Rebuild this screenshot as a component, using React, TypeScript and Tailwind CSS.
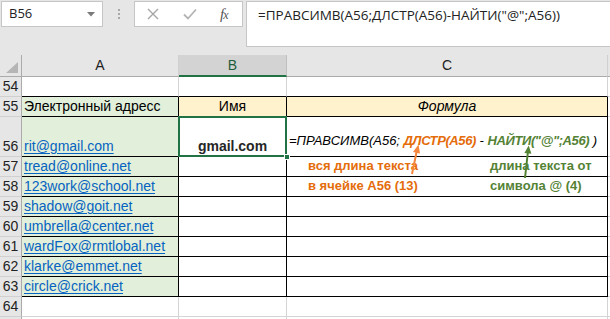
import React from 'react';

const emails = [
  'tread@online.net',
  '123work@school.net',
  'shadow@goit.net',
  'umbrella@center.net',
  'wardFox@rmtlobal.net',
  'klarke@emmet.net',
  'circle@crick.net',
];

function RowNum({ n, h }: { n: string; h: string }) {
  return (
    <div className={`w-[22px] shrink-0 ${h} bg-[#e6e6e6] border-r border-b border-r-[#ababab] border-b-[#d0d0d0] flex items-end justify-center pb-px text-[14px] leading-[18px] text-[#222]`}>
      {n}
    </div>
  );
}

export default function App() {
  return (
    <div className="w-[610px] h-[319px] overflow-hidden bg-white font-['Liberation_Sans',Arial,sans-serif] text-black">
      {/* Toolbar: name box, buttons, formula bar */}
      <div className="h-[55px] bg-[#e6e6e6] flex items-start pt-px">
        <div className="ml-px w-[102px] h-[26px] bg-white border border-[#c6c6c6] flex items-center justify-between pl-[7px] pr-[7px] font-['Open_Sans',sans-serif] text-[13px] text-[#222]">
          <span>B56</span>
          <svg width="8" height="5" viewBox="0 0 8 5"><path d="M0 0h8L4 4.5z" fill="#7a7a7a" /></svg>
        </div>
        <div className="w-[31px] h-[26px] flex items-center justify-center">
          <div className="flex flex-col gap-[2px]">
            <span className="w-[2px] h-[2px] bg-[#a8a8a8]" />
            <span className="w-[2px] h-[2px] bg-[#a8a8a8]" />
            <span className="w-[2px] h-[2px] bg-[#a8a8a8]" />
          </div>
        </div>
        <div className="w-[109px] h-[26px] bg-white border border-[#c6c6c6] flex items-center">
          <svg className="ml-[12px]" width="12" height="12" viewBox="0 0 12 12">
            <path d="M1 1l10 10M11 1L1 11" stroke="#a6a6a6" strokeWidth="1.4" />
          </svg>
          <svg className="ml-[24px]" width="14" height="12" viewBox="0 0 14 12">
            <path d="M1 6.5l4 4L13 1.5" stroke="#b4b4b4" strokeWidth="1.8" fill="none" />
          </svg>
          <span className="ml-[23px] font-['Liberation_Serif',serif] italic text-[15px] text-[#555] tracking-[-1px]">
            f<span className="text-[12px]">x</span>
          </span>
        </div>
        <div className="ml-[3px] flex-1 h-[46px] bg-white border border-[#c6c6c6] border-r-0 pl-[11px] pt-[3px] font-['Open_Sans',sans-serif] text-[13.5px] text-[#222]">
          =ПРАВСИМВ(A56;ДЛСТР(A56)-НАЙТИ("@";A56))
        </div>
      </div>

      {/* Sheet */}
      <div className="relative text-[14px]">
        {/* Column headers */}
        <div className="flex h-[22px] text-[#222]">
          <div className="w-[22px] shrink-0 bg-[#e6e6e6] border-r border-b border-[#ababab] relative">
            <svg className="absolute left-[6px] top-[7px]" width="12" height="11" viewBox="0 0 12 11">
              <path d="M12 0v11H0z" fill="#b5b5b5" />
            </svg>
          </div>
          <div className="w-[157px] shrink-0 bg-[#e6e6e6] border-r border-b border-r-[#d0d0d0] border-b-[#ababab] flex items-center justify-center">A</div>
          <div className="w-[108px] shrink-0 bg-[#d3d3d3] border-r border-r-[#c0c0c0] border-b-2 border-b-[#217346] flex items-center justify-center text-[#1e5e3a]">B</div>
          <div className="w-[321px] shrink-0 bg-[#e6e6e6] border-r border-b border-r-[#d0d0d0] border-b-[#ababab] flex items-center justify-center">C</div>
          <div className="flex-1 bg-[#e6e6e6] border-b border-[#ababab]" />
        </div>

        {/* Row 54 */}
        <div className="flex">
          <RowNum n="54" h="h-[20px]" />
          <div className="w-[157px] shrink-0 h-[20px] border-r border-b border-r-[#d4d4d4] border-b-black" />
          <div className="w-[108px] shrink-0 h-[20px] border-r border-b border-r-[#d4d4d4] border-b-black" />
          <div className="w-[321px] shrink-0 h-[20px] border-r border-b border-r-[#d4d4d4] border-b-black" />
          <div className="flex-1 h-[20px] border-b border-[#d4d4d4]" />
        </div>

        {/* Row 55 headings */}
        <div className="flex leading-[18px]">
          <RowNum n="55" h="h-[20px]" />
          <div className="w-[157px] shrink-0 h-[20px] bg-[#e2efda] border-r border-b border-black flex items-end pl-[2px] pb-px">Электронный адресс</div>
          <div className="w-[108px] shrink-0 h-[20px] bg-[#fff2cc] border-r border-b border-black flex items-end justify-center pb-px">Имя</div>
          <div className="w-[321px] shrink-0 h-[20px] bg-[#fff2cc] border-r border-b border-black flex items-end justify-center pb-px italic">Формула</div>
          <div className="flex-1 h-[20px] border-b border-[#d4d4d4]" />
        </div>

        {/* Row 56 */}
        <div className="flex leading-[18px]">
          <RowNum n="56" h="h-[40px]" />
          <div className="w-[157px] shrink-0 h-[40px] bg-[#e2efda] border-r border-b border-black flex items-end pl-[2px] pb-px">
            <span className="text-[#0563c1] underline underline-offset-2">rit@gmail.com</span>
          </div>
          <div className="w-[108px] shrink-0 h-[40px] border-r border-b border-black flex items-end justify-center pb-px font-bold text-[#262626] relative">
            gmail.com
            <div className="absolute -left-px -top-px -right-px -bottom-px border-2 border-[#217346]" />
            <div className="absolute -right-[4px] -bottom-[4px] w-[6px] h-[6px] bg-[#217346] border border-white" />
          </div>
          <div className="w-[321px] shrink-0 h-[40px] border-r border-b border-black flex items-end pl-[2px] pb-[6px] italic whitespace-nowrap text-[13px]">
            <span>
              =ПРАВСИМВ(A56; <b className="text-[#e46c0a] tracking-[-0.4px]">ДЛСТР(A56)</b> - <b className="text-[#548235] tracking-[-0.4px]">НАЙТИ("@";A56)</b> )
            </span>
          </div>
          <div className="flex-1 h-[40px] border-b border-[#d4d4d4]" />
        </div>

        {/* Rows 57-63 */}
        {emails.map((e, i) => (
          <div key={e} className="flex leading-[18px]">
            <RowNum n={String(57 + i)} h="h-[20px]" />
            <div className="w-[157px] shrink-0 h-[20px] bg-[#e2efda] border-r border-b border-black flex items-end pl-[2px] pb-px">
              <span className="text-[#0563c1] underline underline-offset-2">{e}</span>
            </div>
            <div className="w-[108px] shrink-0 h-[20px] border-r border-b border-black" />
            <div className="w-[321px] shrink-0 h-[20px] border-r border-b border-black flex items-end pb-px font-bold text-[13px] whitespace-nowrap">
              {i === 0 && (
                <>
                  <span className="w-[203px] pl-[21px] text-[#e46c0a]">вся длина текста</span>
                  <span className="text-[#548235]">длина текста от</span>
                </>
              )}
              {i === 1 && (
                <>
                  <span className="w-[203px] pl-[21px] text-[#e46c0a]">в ячейке A56 (13)</span>
                  <span className="text-[#548235]">символа @ (4)</span>
                </>
              )}
            </div>
            <div className="flex-1 h-[20px] border-b border-[#d4d4d4]" />
          </div>
        ))}

        {/* Row 64 */}
        <div className="flex">
          <RowNum n="64" h="h-[20px]" />
          <div className="w-[157px] shrink-0 h-[20px] border-r border-b border-[#d4d4d4]" />
          <div className="w-[108px] shrink-0 h-[20px] border-r border-b border-[#d4d4d4]" />
          <div className="w-[321px] shrink-0 h-[20px] border-r border-b border-[#d4d4d4]" />
          <div className="flex-1 h-[20px] border-b border-[#d4d4d4]" />
        </div>
        <div className="flex h-[10px]">
          <div className="w-[22px] shrink-0 bg-[#e6e6e6] border-r border-[#ababab]" />
          <div className="w-[157px] shrink-0 border-r border-[#d4d4d4]" />
          <div className="w-[108px] shrink-0 border-r border-[#d4d4d4]" />
          <div className="w-[321px] shrink-0 border-r border-[#d4d4d4]" />
        </div>

        {/* Annotation arrows */}
        <svg className="absolute left-0 top-[-55px] pointer-events-none" width="610" height="319" viewBox="0 0 610 319">
          <path d="M412 174L417 150" stroke="#f4863d" strokeWidth="2" />
          <path d="M418.5 144.5l-5.5 7.5l7 1.5z" fill="#f4863d" />
          <path d="M525 178L528 151" stroke="#548235" strokeWidth="2" />
          <path d="M528.7 145.5l-4.3 7.5l7 0.7z" fill="#548235" />
        </svg>
      </div>
    </div>
  );
}
